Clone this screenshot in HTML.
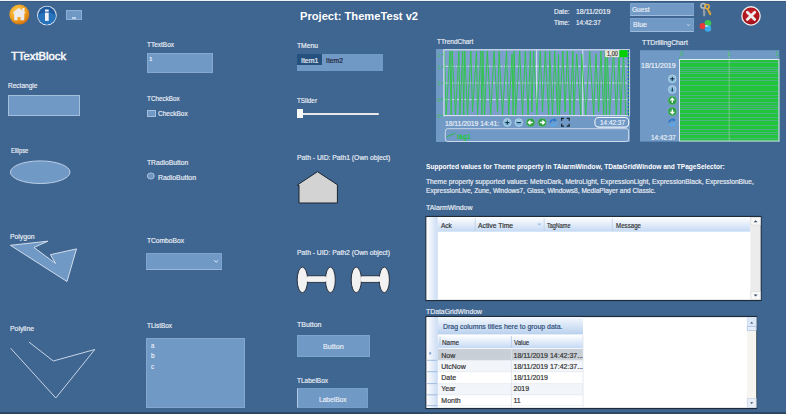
<!DOCTYPE html>
<html><head><meta charset="utf-8">
<style>
html,body{margin:0;padding:0;}
body{width:786px;height:414px;overflow:hidden;position:relative;background:#3f6591;font-family:"Liberation Sans",sans-serif;}
.t{position:absolute;white-space:nowrap;line-height:1;transform-origin:0 0;-webkit-text-stroke:0.18px currentColor;}
.a{position:absolute;box-sizing:border-box;}
.ctl{position:absolute;box-sizing:border-box;background:#7099c6;border:1px solid #a4bfdc;}
</style></head><body>
<div class="a" style="left:0;top:0;width:786px;height:1px;background:#eef1f5"></div>
<div class="a" style="left:0;top:1px;width:786px;height:1px;background:#385b84"></div>
<div class="a" style="left:0;top:412px;width:786px;height:2px;background:#2e4966"></div>
<div class="ctl" style="left:8px;top:95px;width:72px;height:21px"></div>
<div class="ctl" style="left:66px;top:10.3px;width:16px;height:9.8px;border-color:#8eafd4;background:#6f98c5"></div>
<div class="a" style="left:71.8px;top:17.1px;width:4.2px;height:1.7px;background:#bcd0e8"></div>
<div class="ctl" style="left:146.5px;top:53px;width:66px;height:20px;border-color:#87a9cf"></div>
<div class="ctl" style="left:147.2px;top:110px;width:8.7px;height:7.1px;border-color:#a4bfdc"></div>
<div class="ctl" style="left:146.3px;top:253px;width:75.8px;height:17px;border-color:#7ea3cc;border-bottom-color:#9ab7d9"></div>
<div class="ctl" style="left:146.4px;top:337.8px;width:98.6px;height:70.3px;border-color:#83a7cf"></div>
<div class="a" style="left:296.5px;top:53.7px;width:86.5px;height:17.6px;background:#7099c6"></div>
<div class="a" style="left:297.3px;top:54.2px;width:24.6px;height:10.7px;background:#26507e"></div>
<div class="a" style="left:299.8px;top:112.5px;width:79px;height:2px;border-radius:1px;background:#e8e8ea"></div>
<div class="a" style="left:296.8px;top:108.9px;width:6.5px;height:9.6px;background:#f8f8f8"></div>
<div class="ctl" style="left:297px;top:335px;width:73.2px;height:21.5px;border-color:#7fa4cc"></div>
<div class="ctl" style="left:296.8px;top:388px;width:71px;height:20px;border-color:#789fca;border-left:1.2px solid #b4cae4"></div>
<div class="ctl" style="left:629.8px;top:3.1px;width:64px;height:12.6px;border-color:#7aa0cb;border-bottom-color:#9dbadb"></div>
<div class="ctl" style="left:629.8px;top:18.2px;width:64px;height:13.5px;border-color:#7aa0cb;border-bottom-color:#9dbadb"></div>
<svg class="a" style="left:0;top:0" width="786" height="414">
<!-- header icons -->
<defs>
<radialGradient id="og" cx="0.4" cy="0.35" r="0.7"><stop offset="0" stop-color="#ffd25a"/><stop offset="0.6" stop-color="#f0a020"/><stop offset="1" stop-color="#c96a10"/></radialGradient>
<radialGradient id="bg1" cx="0.5" cy="0.3" r="0.7"><stop offset="0" stop-color="#3c8ed8"/><stop offset="1" stop-color="#1659a8"/></radialGradient>
<radialGradient id="rg" cx="0.5" cy="0.4" r="0.6"><stop offset="0" stop-color="#d02028"/><stop offset="1" stop-color="#a0121a"/></radialGradient>
<linearGradient id="hdr" x1="0" y1="0" x2="0" y2="1"><stop offset="0" stop-color="#ffffff"/><stop offset="1" stop-color="#c4d9f4"/></linearGradient>
<linearGradient id="grp" x1="0" y1="0" x2="0" y2="1"><stop offset="0" stop-color="#f4f8fd"/><stop offset="1" stop-color="#b9d1ee"/></linearGradient>
<linearGradient id="lcol" x1="0" y1="0" x2="1" y2="0"><stop offset="0" stop-color="#ffffff"/><stop offset="1" stop-color="#cbdcf3"/></linearGradient>
</defs>
<circle cx="19.35" cy="14.6" r="10" fill="url(#og)"/>
<path d="M18.8,8 L22.4,10.6 L22.4,8 L24.5,8 L24.5,12 L25.9,12.9 L24.2,13.2 L24.2,20.2 L20.6,20.2 L20.6,17 L17.4,17 L17.4,20.2 L14.2,20.2 L14.2,13.2 L12.4,12.9 Z" fill="#ececf0"/>
<circle cx="46.9" cy="15.5" r="9.8" fill="#e4ecf4"/>
<circle cx="46.9" cy="15.5" r="8.9" fill="#1f5aa0"/>
<path d="M38,15.5 Q46.9,8.5 55.8,15.5 A8.9,8.9 0 0 1 38,15.5 Z" fill="#2774bd"/>
<rect x="45" y="9.5" width="3.7" height="2.1" fill="#f2f2f4"/>
<rect x="45" y="12.7" width="3.7" height="8.2" fill="#f2f2f4"/>
<circle cx="751" cy="15.9" r="9.8" fill="#eeeeee"/>
<circle cx="751" cy="15.9" r="8.5" fill="url(#rg)"/>
<path d="M747.3,12.2 L754.7,19.6 M754.7,12.2 L747.3,19.6" stroke="#eeeeee" stroke-width="2.8" stroke-linecap="round"/>
<!-- keys -->
<circle cx="703.2" cy="5.8" r="2.3" fill="none" stroke="#b4babf" stroke-width="1.6"/>
<path d="M703.8,8 L704.2,16.2" stroke="#9ca3aa" stroke-width="1.8"/>
<path d="M704.3,12 H705.8 M704.3,14 H705.6" stroke="#9ca3aa" stroke-width="0.9"/>
<circle cx="707.1" cy="6.6" r="2.1" fill="none" stroke="#e3ad3e" stroke-width="1.6"/>
<path d="M707.3,8.6 L710.6,15" stroke="#dba53a" stroke-width="1.8"/>
<path d="M709,11.8 L710.6,11 M709.9,13.5 L711.3,12.8" stroke="#dba53a" stroke-width="0.9"/>
<!-- color circles -->
<circle cx="707.9" cy="23.3" r="3.3" fill="#3cc84c"/>
<circle cx="707.9" cy="28.4" r="3.3" fill="#3aaae8"/>
<circle cx="702.6" cy="26.1" r="3.1" fill="#e83a3c"/>
<ellipse cx="706.6" cy="25.9" rx="1.8" ry="0.9" fill="#a8f0e8"/>
<!-- trend chart -->
<rect x="436" y="49" width="194" height="93" fill="#7099c6"/>
<rect x="443.8" y="49.8" width="185.2" height="65.8" fill="#7ca0cb"/>
<path d="M443.8,66.3H629M443.8,83H629M443.8,99.6H629" stroke="#d4e0ec" stroke-width="0.9" stroke-dasharray="5,1"/>
<path d="M536.7,50V115.5M582.8,50V115.5" stroke="#e6edf5" stroke-width="0.9"/>
<path d="M444.50,51.0 L446.10,115.0 L450.10,51.0 L451.10,115.0 L452.10,51.0 L455.50,115.0 L458.90,51.0 L459.90,115.0 L462.70,51.0 L463.70,115.0 L464.70,51.0 L467.50,115.0 L470.90,51.0 L472.50,112.0 L476.50,51.0 L477.50,115.0 L480.90,51.0 L481.90,115.0 L482.90,51.0 L484.50,115.0 L487.30,51.0 L490.70,115.0 L494.10,51.0 L497.50,112.0 L499.10,51.0 L502.50,115.0 L506.50,51.0 L508.70,115.0 L512.10,54.0 L513.10,115.0 L514.10,51.0 L515.70,115.0 L519.70,51.0 L522.50,115.0 L525.30,51.0 L528.10,115.0 L530.30,51.0 L531.90,112.0 L533.50,51.0 L536.90,115.0 L540.30,51.0 L542.50,112.0 L545.30,51.0 L548.70,115.0 L549.70,51.0 L552.50,115.0 L554.70,51.0 L557.50,115.0 L558.50,54.0 L559.50,115.0 L562.90,51.0 L565.10,112.0 L567.30,51.0 L570.10,115.0 L572.90,51.0 L573.90,115.0 L576.70,54.0 L580.70,115.0 L581.70,54.0 L585.70,115.0 L589.70,51.0 L593.70,115.0 L595.90,54.0 L598.70,112.0 L600.90,51.0 L603.70,115.0 L605.30,51.0 L606.30,115.0 L607.30,51.0 L609.50,115.0 L613.50,51.0 L616.30,115.0 L619.10,51.0 L620.70,115.0 L623.50,51.0 L625.70,115.0" stroke="#2fc54a" stroke-width="0.95" fill="none"/>
<path d="M443.6,49.8H629 M443.9,49.8V116.5 M443.6,115.6H629" stroke="#e2e9f2" stroke-width="1"/>
<path d="M628.4,50V116" stroke="#3cc050" stroke-width="1.1"/><path d="M628.4,50V116" stroke="#2050b8" stroke-width="1.1" stroke-dasharray="2,1.5"/><path d="M629.6,49.5V116" stroke="#dfe7f0" stroke-width="0.8"/>
<text x="437.3" y="56.9" font-size="6.2" fill="#34c24e" font-family="Liberation Sans">1</text><path d="M441,54.6H443.5" stroke="#34c24e" stroke-width="0.8"/><text x="437.3" y="69.1" font-size="6.2" fill="#34c24e" font-family="Liberation Sans">1</text><path d="M441,66.8H443.5" stroke="#34c24e" stroke-width="0.8"/><text x="437.3" y="85.4" font-size="6.2" fill="#34c24e" font-family="Liberation Sans">1</text><path d="M441,83.10000000000001H443.5" stroke="#34c24e" stroke-width="0.8"/><text x="437.3" y="101.6" font-size="6.2" fill="#34c24e" font-family="Liberation Sans">0</text><path d="M441,99.3H443.5" stroke="#34c24e" stroke-width="0.8"/><text x="437.3" y="117.6" font-size="6.2" fill="#34c24e" font-family="Liberation Sans">0</text><path d="M441,115.3H443.5" stroke="#34c24e" stroke-width="0.8"/>
<rect x="605.1" y="50.1" width="14.2" height="7" fill="#e6e6de"/>
<rect x="619.5" y="50.1" width="8" height="7" fill="#00d000"/>
<circle cx="507.3" cy="122.5" r="3.9" fill="#9fc6df" stroke="#c4d6e6" stroke-width="0.6"/><circle cx="507.3" cy="122.5" r="2.9" fill="#74b6dc"/><ellipse cx="507.3" cy="121.1" rx="2.2" ry="1.2" fill="#b6dcf0" opacity="0.8"/><path d="M505.3,122.5H509.3M507.3,120.5V124.5" stroke="#1d2f45" stroke-width="1.1"/><circle cx="518.8" cy="122.5" r="3.9" fill="#9fc6df" stroke="#c4d6e6" stroke-width="0.6"/><circle cx="518.8" cy="122.5" r="2.9" fill="#74b6dc"/><ellipse cx="518.8" cy="121.1" rx="2.2" ry="1.2" fill="#b6dcf0" opacity="0.8"/><path d="M516.8,122.5H520.8" stroke="#1d2f45" stroke-width="1.1"/><circle cx="530.6" cy="122.5" r="4.1" fill="#2f9e45" stroke="#5fc270" stroke-width="0.6"/><path d="M532.8000000000001,122.5H528.6M530.4,120.5L528.4,122.5L530.4,124.5" stroke="#ffffff" stroke-width="1.3" fill="none"/><circle cx="542.2" cy="122.5" r="4.1" fill="#2f9e45" stroke="#5fc270" stroke-width="0.6"/><path d="M540.0,122.5H544.2M542.4000000000001,120.5L544.4000000000001,122.5L542.4000000000001,124.5" stroke="#ffffff" stroke-width="1.3" fill="none"/><path d="M550.1999999999999,122.8 Q550.8,119.3 554.6,119.9" stroke="#2a78cc" stroke-width="1.5" fill="none"/><path d="M554.0,118.1L557.0,120.3L553.8,121.9Z" fill="#2a78cc"/><path d="M556.6,122.2 Q556.0,125.7 552.1999999999999,125.1" stroke="#58a8ec" stroke-width="1.5" fill="none"/><path d="M552.8,126.9L549.8,124.7L553.0,123.1Z" fill="#58a8ec"/>
<path d="M561.6,120.8V118.4H564M566.8,118.4H569.2V120.8M569.2,123.8V126.2H566.8M564,126.2H561.6V123.8" stroke="#1a2530" stroke-width="1.2" fill="none"/>
<rect x="594.9" y="117.5" width="33.8" height="9.6" rx="3.8" fill="#6f98c5" stroke="#eef3f9" stroke-width="1.1"/>
<rect x="445.3" y="128.7" width="183.3" height="12.8" rx="2.5" fill="#7099c6" stroke="#d6e0ec" stroke-width="0.9"/>
<path d="M446.6,137 L455.5,132.9" stroke="#20c040" stroke-width="0.9"/>
<!-- drilling chart -->
<rect x="640" y="50.2" width="139.3" height="91.4" fill="#7099c6"/>
<rect x="679.5" y="59.6" width="99.8" height="81.6" fill="#22c43a"/>
<path d="M680,62.5H778.5M680,67.5H778.5M680,69.5H778.5M680,71.5H778.5M680,73.5H778.5M680,77.5H778.5M680,80.5H778.5M680,85.5H778.5M680,91.5H778.5M680,95.5H778.5M680,98.5H778.5M680,102.5H778.5M680,105.5H778.5M680,107.5H778.5M680,109.5H778.5M680,113.5H778.5M680,117.5H778.5M680,120.5H778.5M680,125.5H778.5M680,129.5H778.5M680,132.5H778.5M680,134.5H778.5M680,138.5H778.5" stroke="#72a8bc" stroke-width="0.9" opacity="0.6"/>
<path d="M679.3,141H779.3" stroke="#c8d8e8" stroke-width="1"/>
<path d="M729.2,52V141" stroke="#b8e0b8" stroke-width="0.7" opacity="0.7"/>
<path d="M679.3,59.5H779.3 M679.5,59.5V141" stroke="#e2e9f2" stroke-width="1"/><path d="M778.9,59.5V141.5" stroke="#c4d2e6" stroke-width="1.2"/>
<text x="680" y="56.4" font-size="6.4" fill="#34c24e" font-family="Liberation Sans">0</text>
<text x="727.6" y="56.4" font-size="6.4" fill="#34c24e" font-family="Liberation Sans">1</text>
<text x="775.6" y="56.4" font-size="6.4" fill="#34c24e" font-family="Liberation Sans">1</text>
<path d="M679.5,59V57.5M729.2,59V57.5M778.8,59V57.5" stroke="#34c24e" stroke-width="0.8"/>
<circle cx="672.3" cy="78.8" r="3.9" fill="#9fc6df" stroke="#c4d6e6" stroke-width="0.6"/><circle cx="672.3" cy="78.8" r="2.9" fill="#74b6dc"/><ellipse cx="672.3" cy="77.39999999999999" rx="2.2" ry="1.2" fill="#b6dcf0" opacity="0.8"/><path d="M670.3,78.8H674.3M672.3,76.8V80.8" stroke="#1d2f45" stroke-width="1.1"/><circle cx="672.3" cy="89.5" r="3.9" fill="#9fc6df" stroke="#c4d6e6" stroke-width="0.6"/><circle cx="672.3" cy="89.5" r="2.9" fill="#74b6dc"/><ellipse cx="672.3" cy="88.1" rx="2.2" ry="1.2" fill="#b6dcf0" opacity="0.8"/><path d="M672.3,87.5V91.5" stroke="#1d2f45" stroke-width="1.1"/><circle cx="672.3" cy="100.6" r="4.1" fill="#2f9e45" stroke="#5fc270" stroke-width="0.6"/><path d="M672.3,102.8V98.6M670.3,100.39999999999999L672.3,98.39999999999999L674.3,100.39999999999999" stroke="#ffffff" stroke-width="1.3" fill="none"/><circle cx="672.3" cy="111.5" r="4.1" fill="#2f9e45" stroke="#5fc270" stroke-width="0.6"/><path d="M672.3,109.3V113.5M670.3,111.7L672.3,113.7L674.3,111.7" stroke="#ffffff" stroke-width="1.3" fill="none"/><path d="M669.0999999999999,122.6 Q669.6999999999999,119.1 673.5,119.7" stroke="#2a78cc" stroke-width="1.5" fill="none"/><path d="M672.9,117.89999999999999L675.9,120.1L672.6999999999999,121.7Z" fill="#2a78cc"/><path d="M675.5,122.0 Q674.9,125.5 671.0999999999999,124.89999999999999" stroke="#58a8ec" stroke-width="1.5" fill="none"/><path d="M671.6999999999999,126.7L668.6999999999999,124.5L671.9,122.89999999999999Z" fill="#58a8ec"/>
<!-- alarm window -->
<rect x="426" y="216.5" width="335" height="84" fill="#ffffff" stroke="#1e2b38" stroke-width="1.2"/>
<rect x="426.6" y="217.1" width="11.2" height="82.8" fill="url(#lcol)"/>
<rect x="437.8" y="217.1" width="312.6" height="14.6" fill="url(#hdr)"/>
<path d="M475.2,218.5V231M544.2,218.5V231M612.3,218.5V231" stroke="#c0cfe2" stroke-width="0.8"/>
<path d="M537.2,223.4L541.4,223.4L539.3,225.8Z" fill="#9cc0ea"/>
<rect x="750.4" y="217.1" width="10" height="82.8" fill="#ececec"/>
<rect x="750.9" y="217.3" width="9.5" height="7.7" fill="#f8f8f8" stroke="#cfcfcf" stroke-width="0.5"/>
<rect x="750.9" y="291.3" width="9.5" height="8.2" fill="#f8f8f8" stroke="#cfcfcf" stroke-width="0.5"/>
<path d="M753.6,222.2L755.6,220.2L757.6,222.2Z M753.6,294.4L755.6,296.4L757.6,294.4Z" fill="#3a4a60"/>
<!-- datagrid -->
<rect x="426" y="316.5" width="330.5" height="92" fill="#ffffff" stroke="#1e2b38" stroke-width="1.2"/>
<rect x="426.6" y="317" width="11.3" height="91" fill="url(#lcol)"/>
<rect x="437.9" y="317" width="145.1" height="17.4" fill="url(#grp)"/>
<rect x="437.9" y="335.2" width="145.1" height="13" fill="url(#hdr)"/>
<path d="M511.4,336V348M440,336.5V346" stroke="#b0c6e2" stroke-width="0.8"/>
<rect x="437.9" y="349" width="145.1" height="11.2" fill="#c9cfd6"/>
<rect x="437.9" y="360.5" width="145.1" height="11" fill="#f2f5fa"/>
<rect x="437.9" y="383.9" width="145.1" height="11" fill="#f2f5fa"/>
<path d="M437.9,360.3H583 M437.9,371.7H583 M437.9,383.6H583 M437.9,394.8H583 M437.9,405.6H583" stroke="#dde4ec" stroke-width="0.6"/>
<path d="M427,360.3H437 M427,371.7H437 M427,383.6H437 M427,394.8H437 M427,405.6H437" stroke="#8fb0d8" stroke-width="0.8"/>
<path d="M429.5,351.5L431.5,353.3L429.5,355.1Z" fill="#5a8fd0"/>
<path d="M583,335V408M511.4,349V408" stroke="#dde3ea" stroke-width="0.8"/>
<rect x="746.9" y="317" width="9.4" height="91" fill="#f6f5ef"/>
<rect x="747.2" y="317.3" width="9" height="9.4" fill="#dce8f8" stroke="#c0d2ea" stroke-width="0.5"/>
<rect x="747.2" y="326.7" width="9" height="3.8" fill="#e4eefa" stroke="#9cb8e0" stroke-width="0.6"/>
<rect x="747.2" y="398.7" width="9" height="9" fill="#e8eef6" stroke="#b8c8dc" stroke-width="0.5"/>
<path d="M750.2,323.5L751.7,321.8L753.2,323.5Z M750.2,402.3L751.7,404L753.2,402.3Z" fill="#2c4a70"/>
<ellipse cx="40.2" cy="172.2" rx="29.8" ry="11.3" fill="#7099c6" stroke="#c5d6ea" stroke-width="0.9"/>
<polygon points="10.4,245.3 47.8,241.2 34,247.5 55.5,263.4 50.4,254.7 76.5,248.9 67,281.5" fill="#7099c6" stroke="#dfe8f2" stroke-width="0.9" stroke-linejoin="miter"/>
<polyline points="10.6,348.2 55.8,398 94.8,349.5 53.3,361 28.9,342" fill="none" stroke="#d6e2ef" stroke-width="0.9"/>
<path d="M297.2,185.1 L317.5,171.7 L337.8,185 L337.4,185 L337.4,203 L299,203 L299,185.1 Z" fill="#d3d3d3" stroke="#1c2530" stroke-width="1"/>
<!-- radio -->
<ellipse cx="150.8" cy="176" rx="3.5" ry="3.1" fill="#6f96c2" stroke="#b8cde4" stroke-width="0.8"/>
<!-- combobox chevron -->
<path d="M214.2,260.3L216.2,262.2L218.2,260.3" stroke="#f0f4f8" stroke-width="0.9" fill="none"/>
<path d="M687.1,24.3L688.4,25.7L689.7,24.3" stroke="#e8eef5" stroke-width="0.8" fill="none"/>
<!-- dumbbells -->
<g fill="#f2f2f2" stroke="#1c2530" stroke-width="0.9">
<path d="M305.5,275.9H327.5V282.3H305.5Z"/>
<ellipse cx="302.4" cy="279.9" rx="5.2" ry="12.8"/>
<ellipse cx="330.4" cy="279.9" rx="4.9" ry="12.8"/>
<path d="M359.5,275.9H381.5V282.3H359.5Z"/>
<ellipse cx="356.3" cy="279.9" rx="5.1" ry="12.8"/>
<ellipse cx="384.3" cy="279.9" rx="5.1" ry="12.8"/>
</g>
<g fill="#f2f2f2"><rect x="306.5" y="276.6" width="20" height="5"/><rect x="360.5" y="276.6" width="20" height="5"/></g>
</svg>

<div class="t" style="left:300.30px;top:11.13px;font-size:10.5px;color:#ffffff;font-weight:bold;transform:scaleX(1.0607);-webkit-text-stroke:0;">Project: ThemeTest v2</div>
<div class="t" style="left:554.20px;top:9.11px;font-size:6.8px;color:#e9eef5;font-weight:normal;transform:scaleX(0.9599);">Date:</div>
<div class="t" style="left:576.00px;top:9.11px;font-size:6.8px;color:#e9eef5;font-weight:normal;transform:scaleX(1.0231);">18/11/2019</div>
<div class="t" style="left:554.20px;top:20.11px;font-size:6.8px;color:#e9eef5;font-weight:normal;transform:scaleX(0.9307);">Time:</div>
<div class="t" style="left:576.00px;top:20.11px;font-size:6.8px;color:#e9eef5;font-weight:normal;transform:scaleX(0.9326);">14:42:37</div>
<div class="t" style="left:10.80px;top:51.97px;font-size:10.2px;color:#ffffff;font-weight:normal;transform:scaleX(1.1056);-webkit-text-stroke:0.45px #f4f6f8;">TTextBlock</div>
<div class="t" style="left:7.60px;top:82.12px;font-size:7.5px;color:#e9eef5;font-weight:normal;transform:scaleX(0.8701);">Rectangle</div>
<div class="t" style="left:10.60px;top:146.72px;font-size:7.5px;color:#e9eef5;font-weight:normal;transform:scaleX(0.7878);">Ellipse</div>
<div class="t" style="left:10.40px;top:233.42px;font-size:7.5px;color:#e9eef5;font-weight:normal;transform:scaleX(0.9073);">Polygon</div>
<div class="t" style="left:10.00px;top:325.02px;font-size:7.5px;color:#e9eef5;font-weight:normal;transform:scaleX(0.9143);">Polyline</div>
<div class="t" style="left:147.20px;top:41.42px;font-size:7.5px;color:#e9eef5;font-weight:normal;transform:scaleX(0.8633);">TTextBox</div>
<div class="t" style="left:147.00px;top:95.12px;font-size:7.5px;color:#e9eef5;font-weight:normal;transform:scaleX(0.8459);">TCheckBox</div>
<div class="t" style="left:158.30px;top:110.42px;font-size:7.5px;color:#e9eef5;font-weight:normal;transform:scaleX(0.8684);">CheckBox</div>
<div class="t" style="left:147.10px;top:158.82px;font-size:7.5px;color:#e9eef5;font-weight:normal;transform:scaleX(0.8983);">TRadioButton</div>
<div class="t" style="left:157.80px;top:173.62px;font-size:7.5px;color:#e9eef5;font-weight:normal;transform:scaleX(0.9204);">RadioButton</div>
<div class="t" style="left:147.00px;top:237.42px;font-size:7.5px;color:#e9eef5;font-weight:normal;transform:scaleX(0.8873);">TComboBox</div>
<div class="t" style="left:147.00px;top:322.42px;font-size:7.5px;color:#e9eef5;font-weight:normal;transform:scaleX(0.8569);">TListBox</div>
<div class="t" style="left:297.20px;top:42.42px;font-size:7.5px;color:#e9eef5;font-weight:normal;transform:scaleX(0.9003);">TMenu</div>
<div class="t" style="left:297.00px;top:96.82px;font-size:7.5px;color:#e9eef5;font-weight:normal;transform:scaleX(0.8412);">TSlider</div>
<div class="t" style="left:296.80px;top:153.82px;font-size:7.5px;color:#e9eef5;font-weight:normal;transform:scaleX(0.9015);">Path - UID: Path1 (Own object)</div>
<div class="t" style="left:296.80px;top:249.42px;font-size:7.5px;color:#e9eef5;font-weight:normal;transform:scaleX(0.8995);">Path - UID: Path2 (Own object)</div>
<div class="t" style="left:297.00px;top:320.72px;font-size:7.5px;color:#e9eef5;font-weight:normal;transform:scaleX(0.9295);">TButton</div>
<div class="t" style="left:297.00px;top:377.22px;font-size:7.5px;color:#e9eef5;font-weight:normal;transform:scaleX(0.8647);">TLabelBox</div>
<div class="t" style="left:323.40px;top:342.82px;font-size:7.5px;color:#e9eef5;font-weight:normal;transform:scaleX(0.9504);">Button</div>
<div class="t" style="left:318.90px;top:396.02px;font-size:7.5px;color:#e9eef5;font-weight:normal;transform:scaleX(0.8825);">LabelBox</div>
<div class="t" style="left:437.30px;top:38.12px;font-size:7.5px;color:#e9eef5;font-weight:normal;transform:scaleX(0.8573);">TTrendChart</div>
<div class="t" style="left:641.60px;top:38.72px;font-size:7.5px;color:#e9eef5;font-weight:normal;transform:scaleX(0.9081);">TTDrillingChart</div>
<div class="t" style="left:425.70px;top:163.16px;font-size:7.2px;color:#ffffff;font-weight:bold;transform:scaleX(0.9184);-webkit-text-stroke:0;">Supported values for Theme property in TAlarmWindow, TDataGridWindow and TPageSelector:</div>
<div class="t" style="left:425.70px;top:178.46px;font-size:7.2px;color:#e9eef5;font-weight:normal;transform:scaleX(0.9338);">Theme property supported values: MetroDark, MetroLight, ExpressionLight, ExpressionBlack, ExpressionBlue,</div>
<div class="t" style="left:425.70px;top:187.16px;font-size:7.2px;color:#e9eef5;font-weight:normal;transform:scaleX(0.9152);">ExpressionLive, Zune, Windows7, Glass, Windows8, MediaPlayer and Classic.</div>
<div class="t" style="left:425.70px;top:204.32px;font-size:7.5px;color:#e9eef5;font-weight:normal;transform:scaleX(0.9240);">TAlarmWindow</div>
<div class="t" style="left:426.00px;top:307.72px;font-size:7.5px;color:#e9eef5;font-weight:normal;transform:scaleX(0.9139);">TDataGridWindow</div>
<div class="t" style="left:149.00px;top:56.29px;font-size:6.2px;color:#eef4fa;font-weight:bold;-webkit-text-stroke:0;">1</div>
<div class="t" style="left:151.00px;top:341.81px;font-size:7.6px;color:#e9eef5;font-weight:normal;transform:scaleX(0.7989);">a</div>
<div class="t" style="left:151.00px;top:352.36px;font-size:7.2px;color:#e9eef5;font-weight:normal;transform:scaleX(0.9009);">b</div>
<div class="t" style="left:151.00px;top:363.31px;font-size:7.6px;color:#e9eef5;font-weight:normal;transform:scaleX(0.8158);">c</div>
<div class="t" style="left:300.90px;top:56.89px;font-size:7px;color:#e8eef6;font-weight:normal;transform:scaleX(0.9943);">Item1</div>
<div class="t" style="left:325.90px;top:56.89px;font-size:7px;color:#1c2636;font-weight:normal;transform:scaleX(0.9714);">Item2</div>
<div class="t" style="left:632.00px;top:6.61px;font-size:6.8px;color:#e9eef5;font-weight:normal;transform:scaleX(0.9639);">Guest</div>
<div class="t" style="left:632.70px;top:21.91px;font-size:6.8px;color:#e9eef5;font-weight:normal;transform:scaleX(1.0294);">Blue</div>
<div class="t" style="left:444.90px;top:120.71px;font-size:6.8px;color:#e9eef5;font-weight:normal;">18/11/2019 14:41:</div>
<div class="t" style="left:599.50px;top:119.91px;font-size:6.8px;color:#e6eef8;font-weight:normal;transform:scaleX(0.9439);">14:42:37</div>
<div class="t" style="left:457.40px;top:133.03px;font-size:7.4px;color:#1ec83c;font-weight:bold;transform:scaleX(0.9075);-webkit-text-stroke:0;">tag1</div>
<div class="t" style="left:606.60px;top:51.06px;font-size:6.4px;color:#3a3a38;font-weight:normal;transform:scaleX(0.8756);">1,00</div>
<div class="t" style="left:641.20px;top:62.81px;font-size:6.8px;color:#e9eef5;font-weight:normal;transform:scaleX(1.0321);">18/11/2019</div>
<div class="t" style="left:650.90px;top:134.51px;font-size:6.8px;color:#e9eef5;font-weight:normal;transform:scaleX(0.9401);">14:42:37</div>
<div class="t" style="left:440.80px;top:221.59px;font-size:7px;color:#333333;font-weight:normal;transform:scaleX(0.9324);">Ack</div>
<div class="t" style="left:477.50px;top:221.59px;font-size:7px;color:#333333;font-weight:normal;transform:scaleX(0.9699);">Active Time</div>
<div class="t" style="left:546.50px;top:221.59px;font-size:7px;color:#333333;font-weight:normal;transform:scaleX(0.7844);">TagName</div>
<div class="t" style="left:615.50px;top:221.59px;font-size:7px;color:#333333;font-weight:normal;transform:scaleX(0.8797);">Message</div>
<div class="t" style="left:442.60px;top:322.86px;font-size:7.2px;color:#2b4a78;font-weight:normal;transform:scaleX(0.9649);">Drag columns titles here to group data.</div>
<div class="t" style="left:442.00px;top:338.89px;font-size:7px;color:#333333;font-weight:normal;transform:scaleX(0.9096);">Name</div>
<div class="t" style="left:513.60px;top:338.89px;font-size:7px;color:#333333;font-weight:normal;transform:scaleX(0.8738);">Value</div>
<div class="t" style="left:441.30px;top:351.79px;font-size:7px;color:#333333;font-weight:normal;">Now</div>
<div class="t" style="left:513.50px;top:351.79px;font-size:7px;color:#333333;font-weight:normal;">18/11/2019 14:42:37...</div>
<div class="t" style="left:441.30px;top:362.99px;font-size:7px;color:#333333;font-weight:normal;">UtcNow</div>
<div class="t" style="left:513.50px;top:362.99px;font-size:7px;color:#333333;font-weight:normal;">18/11/2019 17:42:37...</div>
<div class="t" style="left:441.30px;top:374.19px;font-size:7px;color:#333333;font-weight:normal;">Date</div>
<div class="t" style="left:513.50px;top:374.19px;font-size:7px;color:#333333;font-weight:normal;">18/11/2019</div>
<div class="t" style="left:441.30px;top:385.39px;font-size:7px;color:#333333;font-weight:normal;">Year</div>
<div class="t" style="left:513.50px;top:385.39px;font-size:7px;color:#333333;font-weight:normal;">2019</div>
<div class="t" style="left:441.30px;top:396.59px;font-size:7px;color:#333333;font-weight:normal;">Month</div>
<div class="t" style="left:513.50px;top:396.59px;font-size:7px;color:#333333;font-weight:normal;">11</div>

</body></html>
